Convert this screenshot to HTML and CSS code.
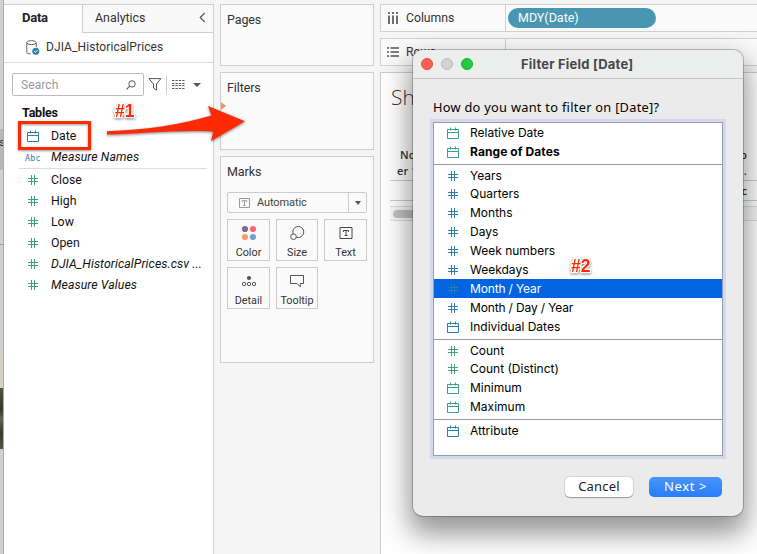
FILE: index.html
```html
<!DOCTYPE html>
<html lang="en">
<head>
<meta charset="utf-8">
<title>Filter Field [Date]</title>
<link rel="stylesheet" href="styles.css">
</head>
<body>
<svg class="defs" width="0" height="0">
  <symbol id="hash" viewBox="0 0 12 12"><path d="M4.5 1v10M7.5 1v10M1 4.5h10M1 7.5h10" fill="none" stroke="currentColor"/></symbol>
  <symbol id="cal" viewBox="0 0 12 12"><path d="M.5 2.5h11v9H.5zM.5 5.5h11M3.5.5v3M8.5.5v3" fill="none" stroke="currentColor"/></symbol>
</svg>
<div class="app">
  <div class="edge"><span class="edge-band">s</span><span class="edge-line"></span><span class="edge-page"></span><span class="edge-photo"></span></div>

  <aside class="data-pane">
    <div class="tabs">
      <div class="tab active">Data</div>
      <div class="tab inactive"><span>Analytics</span>
        <svg width="7" height="11" viewBox="0 0 7 11"><path d="M5.7 1L1.2 5.5l4.5 4.5" fill="none" stroke="#555" stroke-width="1.2"/></svg>
      </div>
    </div>
    <div class="source">
      <svg width="14" height="15" viewBox="0 0 14 15"><path d="M.8 2.8v9.4c0 .9 1.5 1.6 4 1.8M10.2 7V2.8" fill="none" stroke="#666"/><ellipse cx="5.5" cy="2.6" rx="4.7" ry="2" fill="none" stroke="#666"/><circle cx="9.8" cy="11.2" r="3.5" fill="#2e7fa5"/><path d="M8.2 11.2l1.2 1.2 2-2.3" fill="none" stroke="#fff"/></svg>
      <span>DJIA_HistoricalPrices</span>
    </div>
    <div class="toolbar">
      <div class="search"><span>Search</span>
        <svg width="10" height="10" viewBox="0 0 10 10"><circle cx="6" cy="3.9" r="3.2" fill="none" stroke="#555"/><path d="M3.7 6.2L.6 9.3" stroke="#555" stroke-width="1.1"/></svg>
      </div>
      <svg class="funnel" width="14" height="13" viewBox="0 0 14 13"><path d="M.9.6h12L8.5 6v6.2L5.5 10V6z" fill="none" stroke="#555"/></svg>
      <span class="bar"></span>
      <svg class="grid-icon" width="13" height="10" viewBox="0 0 13 10"><path d="M0 .5h12.500M0 3.500h12.500M0 5.500h12.500M0 8.500h12.500" stroke="#555" stroke-dasharray="2.300 1.100"/></svg>
      <span class="caret"></span>
    </div>
    <h2 class="tables">Tables</h2>
    <ul class="fields">
      <li class="blue"><svg class="ic"><use href="#cal"/></svg>Date</li>
      <li class="blue italic"><span class="abc">Abc</span>Measure Names</li>
      <li class="rule"></li>
      <li><svg class="ic"><use href="#hash"/></svg>Close</li>
      <li><svg class="ic"><use href="#hash"/></svg>High</li>
      <li><svg class="ic"><use href="#hash"/></svg>Low</li>
      <li><svg class="ic"><use href="#hash"/></svg>Open</li>
      <li class="italic"><svg class="ic"><use href="#hash"/></svg>DJIA_HistoricalPrices.csv ...</li>
      <li class="italic"><svg class="ic"><use href="#hash"/></svg>Measure Values</li>
    </ul>
  </aside>

  <section class="cards">
    <div class="card pages">Pages</div>
    <div class="card filters">Filters</div>
    <div class="card marks">
      <div class="marks-title">Marks</div>
      <div class="mark-type">
        <svg width="11" height="10" viewBox="0 0 11 10"><path d="M.5.5h10v9H.5zM3.2 4V2.7h4.6V4M5.5 2.7v4.8M4.4 7.5h2.2" fill="none" stroke="#999"/></svg>
        <span>Automatic</span><i><b class="caret"></b></i>
      </div>
      <div class="mark-buttons">
        <div class="mark"><svg width="16" height="16" viewBox="0 0 16 16"><circle cx="4" cy="4" r="3.1" fill="#7f6a97"/><circle cx="12" cy="4" r="3.1" fill="#fa6576"/><circle cx="4" cy="12" r="3.1" fill="#f5a06c"/><circle cx="12" cy="12" r="3.1" fill="#759fc9"/></svg>Color</div>
        <div class="mark"><svg width="16" height="16" viewBox="0 0 16 16"><circle cx="9.3" cy="7" r="5.5" fill="none" stroke="#555"/><circle cx="4.5" cy="11.7" r="2.8" fill="#fafafa" stroke="#555"/></svg>Size</div>
        <div class="mark"><svg width="16" height="16" viewBox="0 0 16 16"><path d="M2 2.5h12v11H2zM5.5 7V5.5h5V7M8 5.5v5M6.6 10.5h2.8" fill="none" stroke="#444"/></svg>Text</div>
        <div class="mark"><svg width="16" height="16" viewBox="0 0 16 16"><circle cx="8" cy="5" r="2.1" fill="#555"/><g fill="none" stroke="#555"><circle cx="3" cy="11" r="1.7"/><circle cx="8" cy="11" r="1.7"/><circle cx="13" cy="11" r="1.7"/></g></svg>Detail</div>
        <div class="mark"><svg width="16" height="16" viewBox="0 0 16 16"><path d="M1.5 2.5h13v8h-3.2v3.4L8 10.5H1.5z" fill="none" stroke="#555"/></svg>Tooltip</div>
      </div>
    </div>
  </section>

  <main class="sheet-area">
    <div class="shelf">
      <div class="shelf-name"><svg width="12" height="12" viewBox="0 0 12 12"><path d="M2 0v2M6 0v2M10 0v2M2 3.5V12M6 3.5V12M10 3.5V12" stroke="#555" stroke-width="1.7"/></svg>Columns</div>
      <div class="pill">MDY(Date)</div>
    </div>
    <div class="shelf">
      <div class="shelf-name"><svg width="12" height="12" viewBox="0 0 12 12"><path d="M0 2h2M0 6h2M0 10h2M3.5 2H12M3.5 6H12M3.5 10H12" stroke="#555" stroke-width="1.7"/></svg>Rows</div>
    </div>
    <div class="sheet">
      <div class="sheet-title">Sh</div>
      <div class="months"><span>No<br>er 1</span><span class="right">p<br>.</span></div>
      <div class="values">c</div>
      <div class="scroll"><span></span></div>
    </div>
  </main>
</div>

<div class="dialog">
  <header class="titlebar"><i class="close"></i><i class="min"></i><i class="max"></i><span>Filter Field [Date]</span></header>
  <p class="question">How do you want to filter on [Date]?</p>
  <div class="list">
    <div class="group green">
      <div class="opt"><svg class="ic"><use href="#cal"/></svg>Relative Date</div>
      <div class="opt strong"><svg class="ic"><use href="#cal"/></svg>Range of Dates</div>
    </div>
    <div class="group blue">
      <div class="opt low"><svg class="ic"><use href="#hash"/></svg>Years</div>
      <div class="opt"><svg class="ic"><use href="#hash"/></svg>Quarters</div>
      <div class="opt"><svg class="ic"><use href="#hash"/></svg>Months</div>
      <div class="opt"><svg class="ic"><use href="#hash"/></svg>Days</div>
      <div class="opt"><svg class="ic"><use href="#hash"/></svg>Week numbers</div>
      <div class="opt"><svg class="ic"><use href="#hash"/></svg>Weekdays</div>
      <div class="opt selected"><svg class="ic"><use href="#hash"/></svg>Month / Year</div>
      <div class="opt"><svg class="ic"><use href="#hash"/></svg>Month / Day / Year</div>
      <div class="opt"><svg class="ic"><use href="#cal"/></svg>Individual Dates</div>
    </div>
    <div class="group green">
      <div class="opt low"><svg class="ic"><use href="#hash"/></svg>Count</div>
      <div class="opt"><svg class="ic"><use href="#hash"/></svg>Count (Distinct)</div>
      <div class="opt"><svg class="ic"><use href="#cal"/></svg>Minimum</div>
      <div class="opt"><svg class="ic"><use href="#cal"/></svg>Maximum</div>
    </div>
    <div class="group blue">
      <div class="opt low"><svg class="ic"><use href="#cal"/></svg>Attribute</div>
    </div>
  </div>
  <footer class="actions"><button class="cancel">Cancel</button><button class="next">Next &gt;</button></footer>
</div>

<span class="drop-mark"></span>
<span class="highlight"></span>
<svg class="arrow" width="150" height="50" viewBox="0 0 150 50"><path d="M7 31.2C45 30 80 25 111.5 15.5L108 6l37 15.2L111 41l2.3-9.5C75 29.5 40 34 7 34.5z" fill="#fe2a05"/></svg>
<span class="callout one">#1</span>
<span class="callout two">#2</span>
</body>
</html>
```
FILE: styles.css
```css
* { box-sizing: border-box; }
body { margin: 0; width: 757px; height: 554px; overflow: hidden; position: relative; background: #f5f5f5; font: 12px/16px Roboto, "Liberation Sans", sans-serif; color: #333; }
.defs { position: absolute; }
ul, h2, p { margin: 0; padding: 0; list-style: none; }
svg { display: block; flex: none; }
.ic { width: 12px; height: 12px; }
.app { display: grid; grid-template-columns: 4px 210px 166px 377px; height: 554px; }

.edge { background: #d1d1d1; border-right: 1px solid #aaa; padding-top: 129px; overflow: hidden; display: flex; flex-direction: column; }
.edge span { flex: none; }
.edge-band { height: 41px; background: #b9b9b9; line-height: 28px; font-size: 11px; text-indent: -1px; }
.edge-line { height: 75px; border-bottom: 1px solid #999; }
.edge-page { height: 143px; background: linear-gradient(#d1d1d1 75%, #d5d0c5 75%); }
.edge-photo { height: 61px; background: linear-gradient(#55513c, #35362b 35%, #626352 50%, #3b392d 75%, #5b5446); }

.data-pane { margin-top: 4px; background: #fff; border: 1px solid #d0d0d0; border-left: 0; border-bottom: 0; }
.tabs { display: flex; height: 28px; }
.tab { line-height: 26px; font-size: 13px; }
.tab.active { width: 78px; padding-left: 18px; font-weight: 700; letter-spacing: -.25px; color: #222; }
.tab.inactive { flex: 1; display: flex; justify-content: space-between; align-items: center; padding: 0 7px 2px 12px; background: #f9f9f9; border-left: 1px solid #d0d0d0; border-bottom: 1px solid #d0d0d0; font-size: 12.4px; }
.source { display: flex; align-items: center; height: 30px; padding: 0 0 1px 22px; gap: 6px; border-bottom: 1px solid #ddd; font-size: 12px; letter-spacing: .08px; }
.toolbar { display: flex; align-items: center; height: 23px; margin: 10px 0 0 8px; }
.search { width: 132px; height: 23px; border: 1px solid #bbb; border-radius: 2px; padding: 0 7px 0 8px; display: flex; align-items: center; justify-content: space-between; color: #999; font-size: 12px; letter-spacing: .1px; }
.funnel { margin-left: 4px; }
.bar { width: 1px; height: 18px; background: #ccc; margin-left: 4px; }
.grid-icon { margin-left: 5px; }
.caret { display: block; border: 4px solid transparent; border-top-color: #555; border-bottom: 0; }
.toolbar .caret { margin-left: 8px; }
.tables { font-size: 12.5px; line-height: 16px; letter-spacing: -.2px; margin: 9px 0 4px 18px; color: #111; }
.fields li { height: 21px; display: flex; align-items: center; gap: 12px; padding-left: 23px; color: #111; font-size: 12.3px; }
.fields .italic { letter-spacing: .08px; }
.fields .ic { color: #3da17c; }
.fields .blue .ic, .abc { color: #2e7fa5; }
.italic { font-style: italic; }
.abc { font: 8.5px/12px "DejaVu Sans Mono", monospace; width: 16px; margin: 2px -2px 0 -2px; }
.fields .rule { height: 1px; background: #ddd; margin: 1px 6px 0 15px; }

.cards { padding: 4px 6px; display: flex; flex-direction: column; gap: 6px; }
.card { border: 1px solid #cdcdcd; background: #fafafa; padding: 7px 6px; font-size: 12.5px; letter-spacing: -.1px; }
.pages { height: 62px; }
.filters { height: 78px; }
.marks { height: 207px; }
.mark-type { display: flex; align-items: center; height: 21px; margin-top: 12px; padding-left: 11px; border: 1px solid #ccc; border-radius: 2px; font-size: 11px; gap: 7px; color: #444; width: 140px; }
.mark-type span { flex: 1; }
.mark-type i { border-left: 1px solid #ccc; width: 18px; height: 19px; display: grid; place-items: center; }
.mark-type .caret { border-width: 4px 3.5px 0; }
.mark-buttons { display: grid; grid-template-columns: 43px 42px 43px; gap: 6px; margin-top: 6px; }
.mark { height: 42px; border: 1px solid #ccc; display: flex; flex-direction: column; align-items: center; padding-top: 5px; font-size: 10.8px; line-height: 14px; gap: 5px; letter-spacing: 0; white-space: nowrap; }

.sheet-area { display: flex; flex-direction: column; gap: 6px; padding-top: 4px; overflow: hidden; }
.shelf { height: 28px; border: 1px solid #d0d0d0; border-right: 0; background: #fafafa; display: flex; align-items: center; flex: none; }
.shelf-name { width: 125px; height: 26px; border-right: 1px solid #d0d0d0; padding-left: 6px; display: flex; align-items: center; gap: 7px; font-size: 12.2px; }
.pill { margin-left: 2px; width: 148px; height: 20px; border-radius: 10px; background: #4996b2; color: #fff; padding-left: 10px; line-height: 20px; font-size: 12.5px; }
.sheet { flex: 1; border: 1px solid #ccc; border-width: 1px 0 0 1px; background: #fff; padding-left: 9px; }
.sheet-title { font: 300 21px/30px "Open Sans", sans-serif; margin: 9px 0 35px 1px; color: #333; }
.months { display: flex; justify-content: space-between; height: 34px; border-bottom: 1px solid #ccc; font: 600 11px/16px "Open Sans", sans-serif; padding: 0 10px 0 7px; letter-spacing: .2px; }
.months span:first-child { text-indent: 3px; }
.right { text-align: right; }
.values { height: 20px; border-bottom: 1px solid #ccc; text-align: right; padding-right: 10px; font: 600 11px/19px "Open Sans", sans-serif; }
.scroll { height: 20px; border-bottom: 1px solid #ddd; background: linear-gradient(#fff 5px, #ddd 5px, #ddd 6px, #f8f8f8 6px); padding: 9px 0 0 3px; }
.scroll span { display: block; width: 200px; height: 8px; border-radius: 4px; background: #c2c2c2; }

.dialog { position: absolute; left: 413px; top: 50px; width: 330px; height: 466px; border-radius: 10px; background: #ebebeb; box-shadow: 0 0 0 1px rgba(0,0,0,.22), 0 14px 28px 4px rgba(0,0,0,.42); color: #111; display: flex; flex-direction: column; }
.titlebar { height: 29px; display: flex; align-items: center; gap: 8px; padding: 0 8px 1px; background: #eceeed; border-bottom: 1px solid #c6c6c6; border-radius: 10px 10px 0 0; font: 700 13px/16px Inter, sans-serif; color: #484848; }
.titlebar i { width: 12px; height: 12px; border-radius: 50%; border: 1px solid; }
.titlebar .close { background: #fe5f57; border-color: #df4840; }
.titlebar .min { background: #d1d3d2; border-color: #bcbcbc; }
.titlebar .max { background: #28c840; border-color: #1dac2b; }
.titlebar span { margin-left: 40px; letter-spacing: .2px; }
.question { margin: 20px 0 7px 20px; font: 12.8px/16px "Noto Sans", sans-serif; letter-spacing: .28px; color: #000; white-space: nowrap; }
.list { margin-left: 20px; width: 290px; height: 334px; border: 1px solid #929dbb; background: #fff; box-shadow: 0 0 0 3px #d2d9e9; font: 12px/19px Inter, sans-serif; color: #000; }
.group { padding-bottom: 3px; }
.group + .group { border-top: 1px solid #999; }
.opt { height: 19px; display: flex; align-items: center; gap: 11px; padding-left: 13px; letter-spacing: 0; }
.low { padding-top: 2px; }
.green .ic { color: #3da17c; }
.blue .ic { color: #2e7fa5; }
.strong { font-weight: 700; letter-spacing: .08px; }
.opt.selected { background: #0264e1; color: #fff; letter-spacing: -.15px; }
.selected + .opt { letter-spacing: -.15px; }
.actions { display: flex; justify-content: flex-end; gap: 16px; padding: 21px 21px 0 0; }
button { height: 20px; border: 0; border-radius: 5px; padding: 0 0 2px; font: 13px/18px "Noto Sans", sans-serif; letter-spacing: .2px; }
.cancel { width: 68px; background: #fff; box-shadow: 0 0 0 1px rgba(0,0,0,.08), 0 1px 1px rgba(0,0,0,.3); color: #222; }
.next { width: 73px; background: linear-gradient(#4896fa, #277cf9); color: #fff; letter-spacing: .6px; }

.drop-mark { position: absolute; left: 221px; top: 102px; border: 4px solid transparent; border-left: 5px solid #f39452; border-right: 0; }
.highlight { position: absolute; left: 18px; top: 121px; width: 73px; height: 29px; border: 3px solid #fe2a05; filter: drop-shadow(0 1px 1px rgba(0,0,0,.4)); }
.arrow { position: absolute; left: 100px; top: 100px; filter: drop-shadow(0 1px 1.5px rgba(0,0,0,.5)); }
.callout { position: absolute; font: 700 17.5px/16px "Liberation Sans", sans-serif; color: #fe2a05; -webkit-text-stroke: 2.5px #fff; paint-order: stroke fill; filter: drop-shadow(0 1px 1px rgba(0,0,0,.5)); }
.one { left: 115px; top: 103px; }
.two { left: 571px; top: 258px; }
```
